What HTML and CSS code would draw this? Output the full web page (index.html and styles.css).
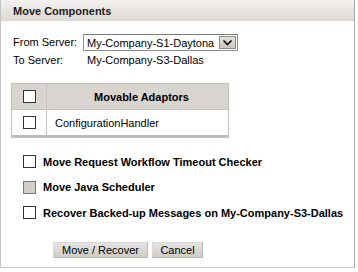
FILE: index.html
```html
<!DOCTYPE html>
<html>
<head>
<meta charset="utf-8">
<link rel="stylesheet" href="styles.css">
</head>
<body>
<div class="dialog">
  <div class="titlebar">Move Components</div>
  <div class="content">
    <div class="servers">
      <span class="label">From Server:</span>
      <div class="select">
        <span class="select-text">My-Company-S1-Daytona</span>
        <span class="select-btn"><svg width="11" height="8" viewBox="0 0 11 8"><path d="M1.5 1.5 L5.5 5.5 L9.5 1.5" fill="none" stroke="#000" stroke-width="1.6"/></svg></span>
      </div>
      <span class="label">To Server:</span>
      <span class="value">My-Company-S3-Dallas</span>
    </div>

    <div class="adaptors">
      <div class="cell chk head"><span class="box"></span></div>
      <div class="cell name head">Movable Adaptors</div>
      <div class="cell chk"><span class="box"></span></div>
      <div class="cell name">ConfigurationHandler</div>
    </div>

    <div class="options">
      <div class="option"><span class="box"></span><span>Move Request Workflow Timeout Checker</span></div>
      <div class="option"><span class="box disabled"></span><span>Move Java Scheduler</span></div>
      <div class="option"><span class="box"></span><span>Recover Backed-up Messages on My-Company-S3-Dallas</span></div>
    </div>

    <div class="buttons">
      <button class="btn wide">Move / Recover</button>
      <button class="btn">Cancel</button>
    </div>
  </div>
</div>
</body>
</html>
```
FILE: styles.css
```css
html, body {
  margin: 0;
  padding: 0;
  background: #fff;
}
body {
  font-family: "Liberation Sans", Arial, sans-serif;
  font-size: 11px;
  color: #000;
}
.dialog {
  width: 355px;
  height: 268px;
  box-sizing: border-box;
  border-left: 1px solid #c4c4c4;
  border-right: 1px solid #a8a8a8;
  border-bottom: 1px solid #c8c8c8;
}
.titlebar {
  height: 21px;
  line-height: 22px;
  padding-left: 12px;
  font-weight: bold;
  color: #1c1c1c;
  background: linear-gradient(#f3f2f0, #dcd9d4);
}
.content {
  padding: 13px 0 0 12px;
}
.servers {
  display: grid;
  grid-template-columns: 70px auto;
  align-items: center;
  row-gap: 1px;
}
.label {
  line-height: 17px;
}
.select {
  width: 155px;
  height: 17px;
  box-sizing: border-box;
  border: 1px solid #8e8e8e;
  border-top-color: #7a7a7a;
  display: flex;
  align-items: center;
  justify-content: space-between;
}
.select-text {
  padding-left: 3px;
}
.select-btn {
  width: 17px;
  height: 13px;
  margin-right: 1px;
  box-sizing: border-box;
  border: 1px solid #8a8a8a;
  background: linear-gradient(#e2e0dc, #cbc8c2);
  display: flex;
  align-items: center;
  justify-content: center;
}
.value {
  padding-left: 4px;
  line-height: 17px;
}
.adaptors {
  margin-top: 14px;
  margin-left: -2px;
  width: 218px;
  display: grid;
  grid-template-columns: 35px 1fr;
  box-sizing: border-box;
  border: 1px solid #c2c2c2;
  border-bottom: 3px solid #bdbdbd;
}
.cell {
  height: 25px;
  display: flex;
  align-items: center;
}
.cell.head {
  background: #d8d5d0;
}
.cell.chk {
  justify-content: center;
  border-right: 1px solid #c4c4c4;
}
.cell.chk.head {
  border-bottom: 1px solid #c4c4c4;
}
.cell.name.head {
  justify-content: center;
  font-weight: bold;
  border-bottom: 1px solid #c4c4c4;
}
.cell.name {
  padding-left: 8px;
}
.box {
  width: 13px;
  height: 13px;
  box-sizing: border-box;
  border: 1px solid #333;
  background: #fff;
  flex: none;
}
.box.disabled {
  background: #d2cfca;
  border-color: #7a7a7a;
}
.options {
  margin-top: 17px;
  padding-left: 10px;
  display: flex;
  flex-direction: column;
  gap: 12.5px;
}
.option {
  display: flex;
  align-items: center;
  gap: 7px;
  font-weight: bold;
  height: 13px;
}
.buttons {
  margin-top: 23px;
  padding-left: 40px;
  display: flex;
  gap: 4px;
}
.btn {
  font-family: "Liberation Sans", Arial, sans-serif;
  font-size: 11px;
  color: #000;
  height: 16px;
  padding: 0 7px;
  border: 1px solid #d8d8d8;
  border-bottom-color: #b8b8b8;
  border-right-color: #b8b8b8;
  background: linear-gradient(#e6e4e1, #cfccc7);
  line-height: 14px;
}
.btn.wide {
  width: 95px;
}
.btn:not(.wide) {
  width: 51px;
}
```
